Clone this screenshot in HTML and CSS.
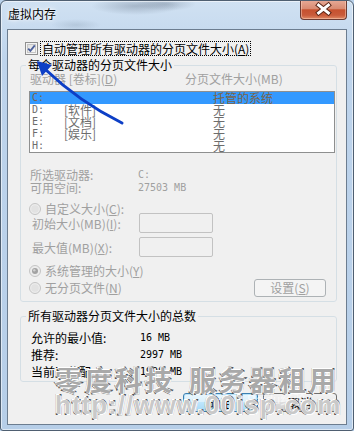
FILE: index.html
```html
<!DOCTYPE html>
<html lang="zh-CN">
<head>
  <meta charset="UTF-8">
  <meta name="viewport" content="width=device-width, initial-scale=1.0">
  <title>虚拟内存</title>
  <link rel="stylesheet" href="styles.css">
</head>
<body>

  <div class="window">
    <div class="titlebar">
      <span class="title">虚拟内存</span>
      <button class="close">
        <svg width="46" height="19" viewBox="0 0 46 19">
          <path d="M18 5 L28 13 M28 5 L18 13" stroke="#5a2516" stroke-width="5" stroke-linecap="square" fill="none"/>
          <path d="M18 5 L28 13 M28 5 L18 13" stroke="#fff" stroke-width="3" stroke-linecap="square" fill="none"/>
        </svg>
      </button>
    </div>

    <div class="client">
      <div class="auto">
        <span class="checkbox">
          <svg width="13" height="13" viewBox="0 0 13 13">
            <defs>
              <linearGradient id="cb" x1="0" y1="0" x2="1" y2="1">
                <stop offset="0" stop-color="#dcdcdc"/>
                <stop offset="1" stop-color="#fbfbfb"/>
              </linearGradient>
            </defs>
            <rect x="0.5" y="0.5" width="12" height="12" fill="#f4f4f4" stroke="#8f8f8f"/>
            <rect x="2.5" y="2.5" width="8" height="8" fill="url(#cb)" stroke="#c6c6c6"/>
            <path d="M3.2 6.6 L5.4 8.9 L9.8 3.4" stroke="#4d619c" stroke-width="1.8" fill="none"/>
          </svg>
        </span>
        <span class="focus">自动管理所有驱动器的分页文件大小(<u>A</u>)</span>
      </div>

      <fieldset class="group per-drive">
        <legend>每个驱动器的分页文件大小</legend>
        <div class="cols">
          <span class="col-drive">驱动器 [卷标](<u>D</u>)</span>
          <span>分页文件大小(MB)</span>
        </div>
        <ul class="drive-list">
          <li class="selected"><span class="letter num">C:</span><span class="label"></span><span>托管的系统</span></li>
          <li><span class="letter num">D:</span><span class="label">[软件]</span><span>无</span></li>
          <li><span class="letter num">E:</span><span class="label">[文档]</span><span>无</span></li>
          <li><span class="letter num">F:</span><span class="label">[娱乐]</span><span>无</span></li>
          <li><span class="letter num">H:</span><span class="label"></span><span>无</span></li>
        </ul>

        <div class="info">
          <span>所选驱动器:</span><span class="num">C:</span>
          <span>可用空间:</span><span class="num">27503 MB</span>
        </div>

        <div class="radio-row custom">
          <svg class="radio" width="12" height="12" viewBox="0 0 12 12">
            <circle cx="6" cy="6" r="5.5" fill="#ececec" stroke="#c4c4c4"/>
            <circle cx="6" cy="6" r="3.8" fill="#e2e2e2"/>
          </svg>
          <span>自定义大小(<u>C</u>):</span>
        </div>
        <div class="size-row first">
          <span class="size-label">初始大小(MB)(<u>I</u>):</span>
          <span class="input"></span>
        </div>
        <div class="size-row second">
          <span class="size-label">最大值(MB)(<u>X</u>):</span>
          <span class="input"></span>
        </div>

        <div class="radio-row system">
          <svg class="radio" width="12" height="12" viewBox="0 0 12 12">
            <circle cx="6" cy="6" r="5.5" fill="#ececec" stroke="#c4c4c4"/>
            <circle cx="6" cy="6" r="3" fill="#a2a2a2"/>
            <circle cx="5.3" cy="5.2" r="1.2" fill="#cfcfcf"/>
          </svg>
          <span>系统管理的大小(<u>Y</u>)</span>
        </div>
        <div class="bottom-row">
          <div class="radio-row">
            <svg class="radio" width="12" height="12" viewBox="0 0 12 12">
              <circle cx="6" cy="6" r="5.5" fill="#ececec" stroke="#c4c4c4"/>
              <circle cx="6" cy="6" r="3.8" fill="#e2e2e2"/>
            </svg>
            <span>无分页文件(<u>N</u>)</span>
          </div>
          <button class="btn-set" disabled>设置(<u>S</u>)</button>
        </div>
      </fieldset>

      <fieldset class="group totals">
        <legend>所有驱动器分页文件大小的总数</legend>
        <div class="total-rows">
          <span>允许的最小值:</span><span class="num">16 MB</span>
          <span>推荐:</span><span class="num">2997 MB</span>
          <span>当前已分配:</span><span class="num">1998 MB</span>
        </div>
      </fieldset>

      <div class="actions">
        <button class="btn ok">确定</button>
        <button class="btn cancel">取消</button>
      </div>
    </div>

    <!-- watermark over the dialog -->
    <div class="wm wm1"><span>零度科技</span><span class="gap">服务器租用</span></div>
    <div class="wm-baidu">Baidu经验</div>
    <div class="wm wm2">http://www.00isp.com</div>

    <svg class="arrow" width="354" height="431" viewBox="0 0 354 431">
      <path d="M122 123 C100 112 70 93 46 70" stroke="#0d3fc6" stroke-width="3" fill="none" stroke-linecap="round"/>
      <polygon points="37,61 52,65 42,76" fill="#0d3fc6"/>
    </svg>
  </div>

</body>
</html>
```

FILE: styles.css
```css
* {
  box-sizing: border-box;
}
body {
  margin: 0;
  width: 354px;
  height: 431px;
  overflow: hidden;
  background: #b9d1ea;
  font-family: "Noto Sans CJK SC", sans-serif;
  font-size: 12px;
  color: #000;
}
.window {
  position: relative;
  width: 354px;
  height: 431px;
  display: flex;
  flex-direction: column;
  border: 1px solid #4f5f71;
  border-radius: 6px 6px 3px 3px;
  overflow: hidden;
  background:
    radial-gradient(ellipse 45px 9px at 135px 5px, rgba(90,105,125,.35), transparent),
    radial-gradient(ellipse 30px 7px at 165px 3px, rgba(90,105,125,.3), transparent),
    radial-gradient(ellipse 25px 6px at 75px 24px, rgba(120,140,160,.25), transparent),
    linear-gradient(#d0e1f2, #bed4ec 60px, #b6cee8);
  box-shadow: inset 0 0 0 1px rgba(255,255,255,.55);
}
.titlebar {
  height: 28px;
  display: flex;
  justify-content: space-between;
  align-items: flex-start;
}
.title {
  padding: 6px 0 0 7px;
  line-height: 14px;
  text-shadow: 0 0 6px #fff, 0 0 3px #fff;
}
.close {
  margin: -1px 6px 0 0;
  width: 47px;
  height: 20px;
  padding: 0;
  display: flex;
  border: 1px solid #6b3b33;
  border-top: none;
  border-radius: 0 0 4px 4px;
  background: linear-gradient(#e8ab98, #d98b72 45%, #c6512f 52%, #c95b3b 80%, #e08a66);
  box-shadow: inset 0 0 0 1px rgba(255,220,200,.45);
}
.client {
  flex: 1;
  margin: 0 6px 5px 6px;
  border: 1px solid #6c7d90;
  background: #f0f0f0;
  display: flex;
  flex-direction: column;
}
.auto {
  margin: 11px 0 0 17px;
  height: 15px;
  display: flex;
  align-items: center;
}
.checkbox {
  display: flex;
  width: 13px;
  height: 13px;
}
.focus {
  margin-left: 2px;
  padding: 0 1px;
  line-height: 13px;
  border: 1px dotted #000;
}
u {
  text-decoration: underline;
  text-underline-offset: 1px;
}
.group {
  margin: 2px 9px 0 12px;
  padding: 0 0 4px 0;
  min-width: 0;
  border: 1px solid #d5dfe5;
  border-radius: 3px;
}
.group legend {
  margin-left: 5px;
  padding: 0 2px;
  line-height: 14px;
}
.cols {
  display: flex;
  margin-left: 9px;
  line-height: 14px;
  color: #a0a0a0;
}
.col-drive {
  width: 155px;
}
.num {
  font-family: "DejaVu Sans Mono", monospace;
  font-size: 10px;
}
.drive-list {
  list-style: none;
  margin: 5px 0 0 8px;
  padding: 0;
  width: 306px;
  border: 1px solid #8e8f8f;
  background: #fff;
}
.drive-list li {
  display: flex;
  height: 12px;
  line-height: 12px;
  padding-left: 2px;
  color: #6d6d6d;
}
.drive-list li.selected {
  background: #3399ff;
  color: #7b6448;
}
.letter {
  width: 32px;
}
.label {
  width: 149px;
}
.info {
  display: grid;
  grid-template-columns: 108px auto;
  margin: 15px 0 0 9px;
  line-height: 13px;
  color: #a0a0a0;
}
.radio-row {
  display: flex;
  align-items: center;
  gap: 4px;
  color: #a0a0a0;
}
.custom {
  margin: 8px 0 0 8px;
  line-height: 13px;
}
.size-row {
  display: flex;
  align-items: center;
  height: 20px;
  margin-left: 11px;
  color: #a0a0a0;
}
.size-row.first {
  margin-top: -2px;
}
.size-row.second {
  margin-top: 4px;
}
.size-label {
  width: 107px;
}
.input {
  width: 74px;
  height: 20px;
  border: 1px solid #c2c2c2;
  border-radius: 2px;
  background: #f0f0f0;
}
.system {
  margin: 7px 0 0 8px;
  line-height: 14px;
}
.bottom-row {
  display: flex;
  justify-content: space-between;
  align-items: center;
  height: 18px;
  margin: 1px 10px 0 8px;
  line-height: 14px;
}
.btn-set {
  width: 72px;
  height: 18px;
  padding: 0;
  border: 1px solid #adb2b5;
  border-radius: 3px;
  background: #f4f4f4;
  color: #a0a0a0;
  font-family: inherit;
  font-size: 12px;
  line-height: 16px;
}
.totals {
  margin-top: 7px;
  padding-bottom: 1px;
}
.total-rows {
  display: grid;
  grid-template-columns: 109px auto;
  grid-auto-rows: 17px;
  align-items: center;
  margin: 6px 0 0 10px;
}
.actions {
  display: flex;
  justify-content: flex-end;
  gap: 5px;
  margin: 11px 9px 0 0;
}
.btn {
  height: 19px;
  padding: 0;
  border-radius: 3px;
  font-family: inherit;
  font-size: 12px;
  line-height: 17px;
  color: #000;
}
.ok {
  width: 75px;
  border: 1px solid #3c7fb1;
  background: linear-gradient(#eaf6fd, #d9f0fc 50%, #bee6fd 50%, #a7d9f5);
  box-shadow: inset 0 0 0 1px #b8e3f9;
}
.cancel {
  width: 74px;
  border: 1px solid #707070;
  background: linear-gradient(#f2f2f2, #ebebeb 50%, #dddddd 50%, #cfcfcf);
}
.wm {
  position: absolute;
  left: 54px;
  font-weight: 700;
  color: #a9a9a9;
  -webkit-text-stroke: 2px #4e4e4e;
  paint-order: stroke fill;
  text-shadow: 0 0 1px #fff, 1px 1px 0 #fff, -1px -1px 0 #fff;
  white-space: nowrap;
  pointer-events: none;
}
.wm1 {
  top: 364px;
  font-size: 27px;
  line-height: 30px;
  letter-spacing: 3px;
}
.wm1 .gap {
  margin-left: 14px;
}
.wm2 {
  top: 390px;
  font-family: "Liberation Sans", sans-serif;
  font-size: 26px;
  line-height: 28px;
  letter-spacing: 1px;
  color: #c9c9c9;
}
.wm-baidu {
  position: absolute;
  left: 246px;
  top: 392px;
  font-family: "Liberation Sans", "Noto Sans CJK SC", sans-serif;
  font-size: 13px;
  line-height: 14px;
  color: rgba(255,255,255,.6);
}
.arrow {
  position: absolute;
  left: -1px;
  top: -1px;
  pointer-events: none;
}
```
